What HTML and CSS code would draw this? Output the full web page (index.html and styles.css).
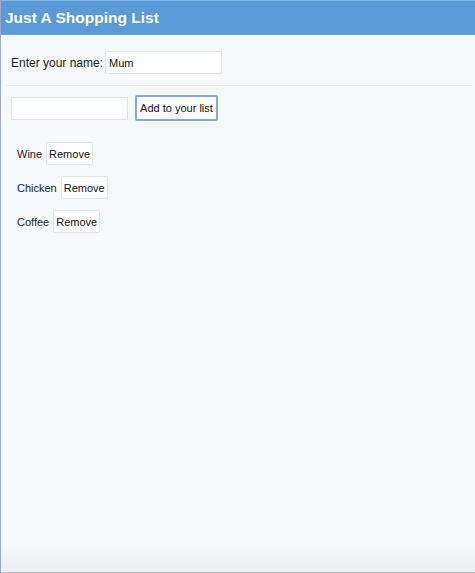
FILE: index.html
```html
<!DOCTYPE html>
<html>
<head>
<meta charset="utf-8">
<link rel="stylesheet" href="styles.css">
</head>
<body>
<div class="app">
  <header class="header">Just A Shopping List</header>
  <div class="name-row">
    <label class="name-label">Enter your name:</label>
    <input class="field" type="text" value="Mum">
  </div>
  <hr class="divider">
  <div class="add-row">
    <input class="field" type="text">
    <button class="add-btn">Add to your list</button>
  </div>
  <ul class="list">
    <li class="item"><span>Wine</span><button class="remove">Remove</button></li>
    <li class="item"><span>Chicken</span><button class="remove">Remove</button></li>
    <li class="item"><span>Coffee</span><button class="remove">Remove</button></li>
  </ul>
  <div class="spacer"></div>
</div>
</body>
</html>
```
FILE: styles.css
```css
html, body {
  margin: 0;
  padding: 0;
  height: 100%;
}
body {
  background: #f5f9fc;
  font-family: "Liberation Sans", Arial, sans-serif;
  color: #222;
}
.app {
  height: 573px;
  box-sizing: border-box;
  border-left: 1px solid #9ea8c6;
  border-bottom: 1px solid #b9bcc2;
  display: flex;
  flex-direction: column;
  background: linear-gradient(to bottom, #f5f9fc 0, #f5f9fc 545px, #eceef0 572px);
}
.header {
  height: 35px;
  box-sizing: border-box;
  border-top: 1px solid #86b3e6;
  border-bottom: 1px solid #6ea5df;
  background: #5a9ad9;
  color: #fff;
  font-weight: bold;
  font-size: 15.5px;
  line-height: 34px;
  padding-left: 4px;
}
.name-row {
  display: flex;
  align-items: center;
  gap: 2px;
  padding: 16px 10px 0;
  height: 23px;
}
.name-label {
  font-size: 12px;
  color: #222;
}
.field {
  width: 117px;
  height: 23px;
  box-sizing: border-box;
  border: 1px solid #e2e5ea;
  background: #fff;
  font-family: "Liberation Sans", Arial, sans-serif;
  font-size: 11px;
  padding: 0 3px;
  margin: 0;
  outline: none;
  color: #111;
}
.divider {
  border: 0;
  border-top: 1px solid #e6ebf0;
  margin: 11px 3px 0 5px;
  height: 0;
}
.add-row {
  display: flex;
  align-items: center;
  gap: 7px;
  padding: 9px 10px 0;
}
.add-btn {
  width: 83px;
  height: 26px;
  box-sizing: border-box;
  border: 2px solid #80a8ea;
  border-radius: 2px;
  background: #fff;
  font-family: "Liberation Sans", Arial, sans-serif;
  font-size: 11px;
  white-space: nowrap;
  color: #111;
  padding: 0;
  margin: 0;
}
.list {
  list-style: none;
  margin: 0;
  padding: 21px 0 0 16px;
}
.item {
  display: flex;
  align-items: center;
  gap: 4px;
  height: 23px;
  margin-bottom: 11px;
  font-size: 11px;
  color: #222;
}
.remove {
  height: 23px;
  box-sizing: border-box;
  border: 1px solid #e2e5ea;
  border-radius: 2px;
  background: #fff;
  font-family: "Liberation Sans", Arial, sans-serif;
  font-size: 11px;
  color: #111;
  padding: 0 2px;
  margin: 0;
}
.spacer {
  flex: 1;
}
```
